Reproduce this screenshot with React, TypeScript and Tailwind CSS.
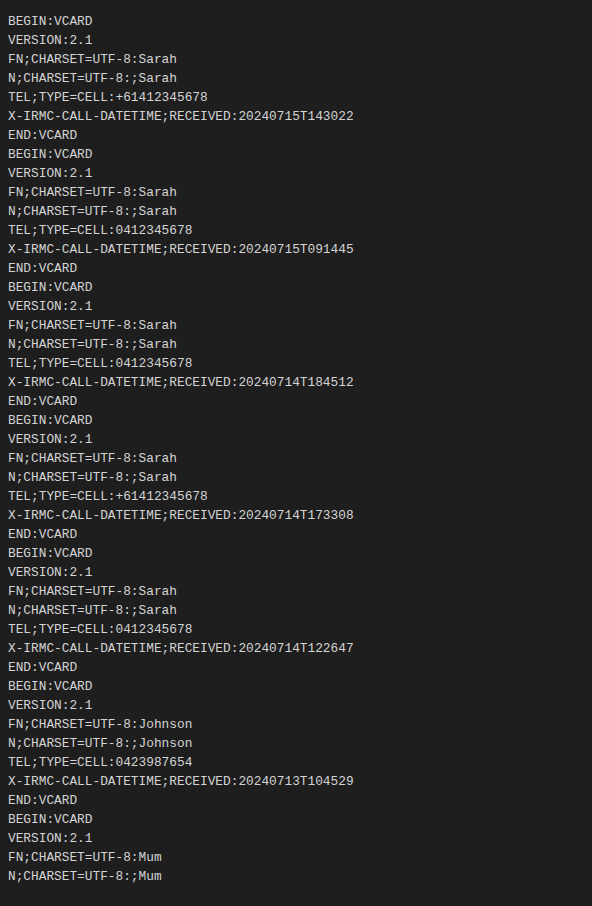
const cards = [
  { fn: "Sarah", tel: "+61412345678", dt: "20240715T143022" },
  { fn: "Sarah", tel: "0412345678", dt: "20240715T091445" },
  { fn: "Sarah", tel: "0412345678", dt: "20240714T184512" },
  { fn: "Sarah", tel: "+61412345678", dt: "20240714T173308" },
  { fn: "Sarah", tel: "0412345678", dt: "20240714T122647" },
  { fn: "Johnson", tel: "0423987654", dt: "20240713T104529" },
];

const lines: string[] = [];
for (const c of cards) {
  lines.push(
    "BEGIN:VCARD",
    "VERSION:2.1",
    `FN;CHARSET=UTF-8:${c.fn}`,
    `N;CHARSET=UTF-8:;${c.fn}`,
    `TEL;TYPE=CELL:${c.tel}`,
    `X-IRMC-CALL-DATETIME;RECEIVED:${c.dt}`,
    "END:VCARD"
  );
}
lines.push("BEGIN:VCARD", "VERSION:2.1", "FN;CHARSET=UTF-8:Mum", "N;CHARSET=UTF-8:;Mum");

export default function App() {
  return (
    <div className="min-h-screen bg-[#1e1e1e] px-2 pt-[12px] pb-4 font-['Liberation_Mono',monospace] text-[12.8px] leading-[19px] text-[#d4d4d4]">
      <pre className="font-['Liberation_Mono',monospace]">
        {lines.join("\n")}
      </pre>
    </div>
  );
}
